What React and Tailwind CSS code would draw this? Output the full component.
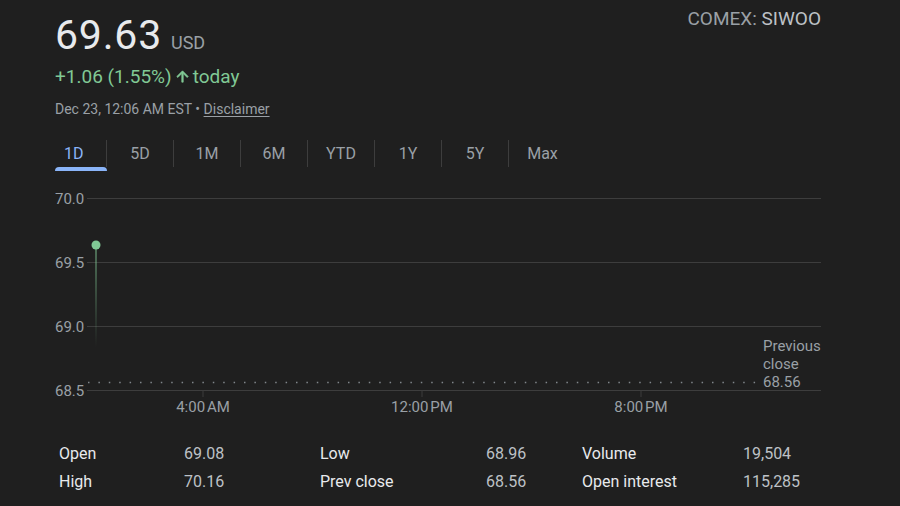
const tabs = ["1D", "5D", "1M", "6M", "YTD", "1Y", "5Y", "Max"];

const stats = [
  [
    ["Open", "69.08"],
    ["High", "70.16"],
  ],
  [
    ["Low", "68.96"],
    ["Prev close", "68.56"],
  ],
  [
    ["Volume", "19,504"],
    ["Open interest", "115,285"],
  ],
];

const colWidths = [
  ["w-[125px]", "w-[136px]"],
  ["w-[166px]", "w-[96px]"],
  ["w-[161px]", "w-auto"],
];

function PriceChart() {
  const grid = [
    { y: 13.5, label: "70.0", base: 19 },
    { y: 77.5, label: "69.5", base: 83 },
    { y: 141.5, label: "69.0", base: 147 },
    { y: 205.5, label: "68.5", base: 211 },
  ];
  // times use a narrow no-break space before AM/PM
  const ticks = [
    { x: 148, label: "4:00\u202FAM" },
    { x: 367, label: "12:00\u202FPM" },
    { x: 586, label: "8:00\u202FPM" },
  ];
  return (
    <svg width="766" height="235" className="block" style={{ fontFamily: "Roboto, Arial, sans-serif" }}>
      <defs>
        <linearGradient id="drop" x1="0" y1="0" x2="0" y2="1">
          <stop offset="0" stopColor="#81c995" stopOpacity="0.5" />
          <stop offset="1" stopColor="#81c995" stopOpacity="0" />
        </linearGradient>
      </defs>
      {grid.map(g => (
        <g key={g.label}>
          <line x1="32" x2="766" y1={g.y} y2={g.y} stroke="#3d3d3d" strokeWidth="1" />
          <text x="0" y={g.base} fontSize="15" fill="#9aa0a6">{g.label}</text>
        </g>
      ))}
      {ticks.map(t => (
        <g key={t.label}>
          <line x1={t.x} x2={t.x} y1="205.5" y2="212" stroke="#3d3d3d" strokeWidth="1" />
          <text x={t.x} y="227" fontSize="15" fill="#9aa0a6" textAnchor="middle">{t.label}</text>
        </g>
      ))}
      {/* previous close */}
      <line x1="33" x2="703" y1="197.5" y2="197.5" stroke="#80868b" strokeWidth="1.5" strokeDasharray="1.5 8.9" />
      <text fontSize="15" fill="#9aa0a6">
        <tspan x="708" y="166">Previous</tspan>
        <tspan x="708" y="184">close</tspan>
        <tspan x="708" y="202">68.56</tspan>
      </text>
      <rect x="40" y="60" width="2" height="102" fill="url(#drop)" />
      <circle cx="41" cy="60" r="4.5" fill="#81c995" />
    </svg>
  );
}

export default function App() {
  return (
    <div className="w-[900px] h-[506px] overflow-hidden bg-[#1f1f1f] pl-[55px] pr-[79px] pt-[15px] font-['Roboto',Arial,sans-serif]">
      <div className="flex justify-between items-start">
        <div>
          <div className="flex items-baseline leading-none">
            <span className="text-[41px] text-[#e8eaed] tracking-[0.8px]">69.63</span>
            <span className="text-[18px] text-[#9aa0a6] ml-[9px]">USD</span>
          </div>
          <div className="mt-[11px] flex items-center text-[19px] leading-none text-[#81c995]">
            <span>+1.06 (1.55%)</span>
            <svg viewBox="0 0 24 24" className="w-[17px] h-[17px] mx-[2px]" fill="#81c995" stroke="#81c995" strokeWidth="1">
              <path d="M4 12l1.41 1.41L11 7.83V20h2V7.83l5.58 5.59L20 12l-8-8-8 8z" />
            </svg>
            <span>today</span>
          </div>
          <div className="mt-[16px] text-[14px] leading-none text-[#9aa0a6]">
            Dec 23, 12:06 AM EST • <span className="underline underline-offset-2">Disclaimer</span>
          </div>
        </div>
        <div className="-mt-[6px] text-[19px] leading-none">
          <span className="text-[#9aa0a6]">COMEX: </span>
          <span className="text-[#bdc1c6]">SIWOO</span>
        </div>
      </div>

      <div className="mt-[24px] flex">
        {tabs.map((t, i) => (
          <div key={t} className={i === 0 ? "w-[52px]" : "w-[67px]"}>
            <div
              className={`h-[27px] flex items-center text-[16px] ${
                i === 0 ? "pl-[9px] text-[#8ab4f8]" : "justify-center text-[#9aa0a6]"
              } ${i < tabs.length - 1 ? "border-r border-[#3d3d3d]" : ""}`}
            >
              {t}
            </div>
            {i === 0 && <div className="h-[4px] rounded-t-[4px] bg-[#8ab4f8]" />}
          </div>
        ))}
      </div>

      <div className="mt-[14px]">
        <PriceChart />
      </div>

      <div className="mt-[20px] flex pl-[4px] text-[16px] leading-[28px]">
        {stats.map((col, ci) => (
          <div key={ci}>
            {col.map(([k, v]) => (
              <div key={k} className="flex">
                <span className={`${colWidths[ci][0]} text-[#e8eaed]`}>{k}</span>
                <span className={`${colWidths[ci][1]} text-[#bdc1c6]`}>{v}</span>
              </div>
            ))}
          </div>
        ))}
      </div>
    </div>
  );
}
